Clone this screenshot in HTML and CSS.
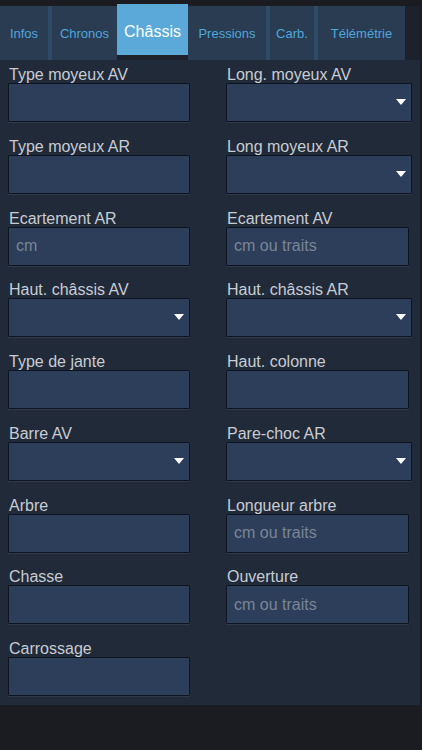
FILE: index.html
```html
<!DOCTYPE html>
<html lang="fr">
<head>
<meta charset="utf-8">
<title>Châssis</title>
<link rel="stylesheet" href="styles.css">
</head>
<body>
<div class="panel">
  <nav class="tabs">
    <div class="tab t-infos">Infos</div>
    <div class="tab t-chronos sep">Chronos</div>
    <div class="tab t-chassis active">Châssis</div>
    <div class="tab t-pressions">Pressions</div>
    <div class="tab t-carb sep">Carb.</div>
    <div class="tab t-tele sep">Télémétrie</div>
  </nav>
  <div class="form">
    <div class="row">
      <div class="field"><label>Type moyeux AV</label><input class="box" type="text"></div>
      <div class="field"><label>Long. moyeux AV</label><div class="select"><select class="box wide"><option></option></select><span class="arrow"></span></div></div>
    </div>
    <div class="row">
      <div class="field"><label>Type moyeux AR</label><input class="box" type="text"></div>
      <div class="field"><label>Long moyeux AR</label><div class="select"><select class="box wide"><option></option></select><span class="arrow"></span></div></div>
    </div>
    <div class="row">
      <div class="field"><label>Ecartement AR</label><input class="box" type="text" placeholder="cm"></div>
      <div class="field"><label>Ecartement AV</label><input class="box" type="text" placeholder="cm ou traits"></div>
    </div>
    <div class="row">
      <div class="field"><label>Haut. châssis AV</label><div class="select"><select class="box"><option></option></select><span class="arrow"></span></div></div>
      <div class="field"><label>Haut. châssis AR</label><div class="select"><select class="box wide"><option></option></select><span class="arrow"></span></div></div>
    </div>
    <div class="row">
      <div class="field"><label>Type de jante</label><input class="box" type="text"></div>
      <div class="field"><label>Haut. colonne</label><input class="box" type="text"></div>
    </div>
    <div class="row">
      <div class="field"><label>Barre AV</label><div class="select"><select class="box"><option></option></select><span class="arrow"></span></div></div>
      <div class="field"><label>Pare-choc AR</label><div class="select"><select class="box wide"><option></option></select><span class="arrow"></span></div></div>
    </div>
    <div class="row">
      <div class="field"><label>Arbre</label><input class="box" type="text"></div>
      <div class="field"><label>Longueur arbre</label><input class="box" type="text" placeholder="cm ou traits"></div>
    </div>
    <div class="row">
      <div class="field"><label>Chasse</label><input class="box" type="text"></div>
      <div class="field"><label>Ouverture</label><input class="box" type="text" placeholder="cm ou traits"></div>
    </div>
    <div class="row">
      <div class="field"><label>Carrossage</label><input class="box" type="text"></div>
    </div>
  </div>
</div>
</body>
</html>
```

FILE: styles.css
```css
html, body {
  margin: 0;
  padding: 0;
}
body {
  width: 422px;
  height: 750px;
  background: #1b1c22;
  font-family: "Liberation Sans", Arial, Helvetica, sans-serif;
  overflow: hidden;
}
.panel {
  width: 420px;
  margin-top: 6px;
  background: #212a39;
  padding-bottom: 9px;
}
.tabs {
  display: flex;
  height: 54px;
  background: #1d212b;
}
.tab {
  box-sizing: border-box;
  height: 54px;
  display: flex;
  align-items: center;
  justify-content: center;
  background: #2a3c51;
  color: #4ea7de;
  font-size: 13px;
}
.tab.sep {
  border-left: 4px solid #2e4b67;
}
.t-infos { width: 48px; }
.t-chronos { width: 69px; }
.t-chassis { width: 71px; }
.t-pressions { width: 78px; }
.t-carb { width: 48px; }
.t-tele { width: 91px; }
.tab.active {
  margin-top: -2px;
  height: 51px;
  padding-top: 4px;
  background: #5ba9d9;
  color: #ffffff;
  font-size: 16px;
}
.form {
  display: flex;
  flex-direction: column;
  gap: 14.75px;
  padding: 5px 0 0 8px;
}
.row {
  display: grid;
  grid-template-columns: 182px 186px;
  column-gap: 36px;
}
.field {
  display: flex;
  flex-direction: column;
}
label {
  display: block;
  height: 18px;
  line-height: 19px;
  font-size: 16px;
  color: #c8ccd3;
  padding-left: 1px;
  white-space: nowrap;
}
.box {
  box-sizing: border-box;
  display: block;
  width: 182px;
  height: 39px;
  margin: 0;
  padding: 0 0 0 7px;
  border: 1px solid #0e141f;
  border-radius: 1px;
  background: #2c3e59;
  box-shadow: 0 1px 0 rgba(150, 170, 200, 0.12);
  color: #c6cbd3;
  font-family: "Liberation Sans", Arial, Helvetica, sans-serif;
  font-size: 16px;
  outline: none;
  -webkit-appearance: none;
  appearance: none;
}
.row .field:nth-child(2) .box {
  width: 183px;
}
.row .field:nth-child(2) .box.wide {
  width: 186px;
}
.box::placeholder {
  color: #7a8597;
  opacity: 1;
}
.select {
  position: relative;
}
.arrow {
  position: absolute;
  right: 6px;
  top: 16px;
  width: 0;
  height: 0;
  border-left: 5px solid transparent;
  border-right: 5px solid transparent;
  border-top: 6px solid #ffffff;
}
```
